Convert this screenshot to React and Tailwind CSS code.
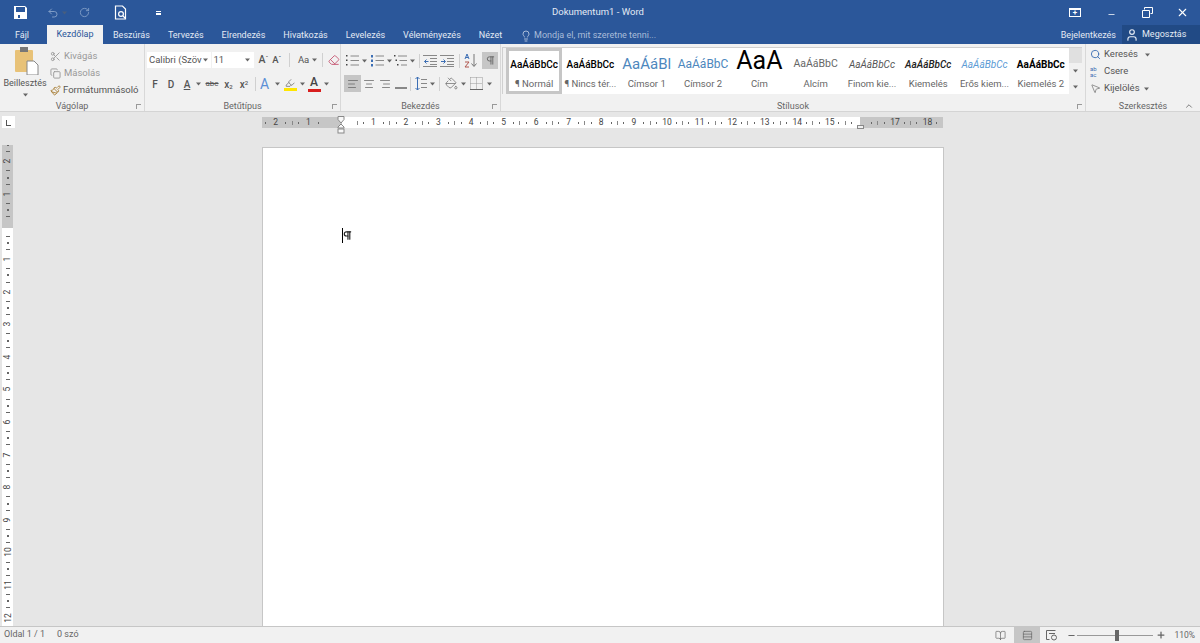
import {
  AlignCenter, AlignLeft, AlignRight, BookOpen, ChevronUp, Copy, Eraser, Highlighter, Lightbulb, Minus, MousePointer2,
  PaintBucket, Paintbrush, Pilcrow, Plus, RotateCw, Rows3, Scissors, Search, Undo2, User, X,
} from 'lucide-react'

const font = 'font-["Roboto","Liberation_Sans",sans-serif]'

const tabs = ['Beszúrás', 'Tervezés', 'Elrendezés', 'Hivatkozás', 'Levelezés', 'Véleményezés', 'Nézet']

const styles = [
  { name: '¶ Normál', preview: 'AaÁáBbCc', cls: 'text-[10px] text-black font-medium', selected: true },
  { name: '¶ Nincs tér...', preview: 'AaÁáBbCc', cls: 'text-[10px] text-black font-medium' },
  { name: 'Címsor 1', preview: 'AaÁáBl', cls: 'text-[15px] text-[#4d87bd]' },
  { name: 'Címsor 2', preview: 'AaÁáBbC', cls: 'text-[12px] text-[#4d87bd]' },
  { name: 'Cím', preview: 'AaA', cls: 'text-[25px] text-black leading-[22px] pb-[6px]' },
  { name: 'Alcím', preview: 'AaÁáBbC', cls: 'text-[10.5px] text-[#666]' },
  { name: 'Finom kie...', preview: 'AaÁáBbCc', cls: 'text-[10px] text-[#555] italic' },
  { name: 'Kiemelés', preview: 'AaÁáBbCc', cls: 'text-[10px] text-[#222] italic font-medium' },
  { name: 'Erős kiem...', preview: 'AaÁáBbCc', cls: 'text-[10px] text-[#5b9bd5] italic' },
  { name: 'Kiemelés 2', preview: 'AaÁáBbCc', cls: 'text-[10px] text-black font-bold' },
]

function Caret({ className = '' }) {
  return (
    <svg width="7" height="4" viewBox="0 0 7 4" className={`shrink-0 text-[#666] ${className}`}>
      <path d="M1 .5h5L3.5 3.5z" fill="currentColor" />
    </svg>
  )
}

function Sep({ className = '' }) {
  return <span className={`w-px h-[14px] bg-[#d0d0d0] shrink-0 ${className}`} />
}

function SaveIcon() {
  return (
    <svg width="13" height="13" viewBox="0 0 13 13" className="shrink-0">
      <path d="M0 0h2v6h9V0l2 2v11H0z" fill="#fff" />
      <path d="M2 0h9v1H2z" fill="#fff" />
      <path d="M4 9h2v3H4z" fill="#2b579a" />
    </svg>
  )
}

function PrintPreviewIcon() {
  return (
    <svg width="14" height="16" viewBox="0 0 14 16" fill="none" stroke="#fff" strokeWidth="1.2">
      <path d="M1.5 1h7l3 3v10h-10z" />
      <circle cx="7" cy="9" r="2.4" />
      <path d="M9 11l2.5 2.5" />
    </svg>
  )
}

function PasteIcon() {
  return (
    <svg width="24" height="28" viewBox="0 0 24 28">
      <rect x="0" y="3" width="18" height="22" rx="1" fill="#e8c278" />
      <rect x="5" y="0" width="8" height="5" fill="#777" />
      <path d="M12 14h7l4 4v10H12z" fill="#fff" stroke="#888" />
    </svg>
  )
}

// bullets on the left, grey rows on the right
function ListIcon({ marks = 'dot', indent = false }) {
  return (
    <svg width="13" height="13" viewBox="0 0 13 13" className="shrink-0">
      {[2, 6.5, 11].map((y, i) => (
        <g key={y}>
          <rect x={indent ? i * 1.5 : 0} y={y - 1} width={marks === 'num' ? 2 : 1.5} height={marks === 'num' ? 2.5 : 1.5} fill={marks === 'num' ? '#3c6eb4' : '#444'} />
          <path d={`M${indent ? 4 + i * 1.5 : 4.5} ${y}H13`} stroke="#888" />
        </g>
      ))}
    </svg>
  )
}

function IndentIcon({ flip = false }) {
  return (
    <svg width="14" height="12" viewBox="0 0 14 12" className="shrink-0">
      <path d="M0 .5h14M7 3.5h7M7 6.5h7M7 9.5h7M0 11.5h14" stroke="#888" />
      <path d={flip ? 'M1 6.5h4M3.5 4.5l2 2-2 2' : 'M5.5 6.5h-4M3.5 4.5l-2 2 2 2'} stroke="#3c6eb4" fill="none" />
    </svg>
  )
}

function SortIcon() {
  return (
    <svg width="14" height="15" viewBox="0 0 14 15" className="shrink-0" fill="none">
      <path d="M1 6l2-5 2 5M1.8 4.5h2.4" stroke="#3c6eb4" />
      <path d="M1 9h4l-4 5h4" stroke="#b0574f" />
      <path d="M10 1v12M7.5 10.5l2.5 3 2.5-3" stroke="#777" />
    </svg>
  )
}

function LineSpacingIcon() {
  return (
    <svg width="12" height="15" viewBox="0 0 12 15" className="shrink-0" fill="none">
      <path d="M2.5 1v13M.5 3l2-2 2 2M.5 12l2 2 2-2" stroke="#3c6eb4" />
      <path d="M6 3.5h6M6 7.5h6M6 11.5h6" stroke="#888" />
    </svg>
  )
}

function BorderIcon() {
  return (
    <svg width="13" height="13" viewBox="0 0 13 13" className="shrink-0">
      <path d="M.5 .5h12M.5 6.5h12M6.5 .5v12M.5 .5v12M12.5 .5v12" stroke="#999" strokeDasharray="1 1" fill="none" />
      <path d="M0 12.5h13" stroke="#666" />
    </svg>
  )
}

function WebLayoutIcon() {
  return (
    <svg width="12" height="12" viewBox="0 0 12 12" className="shrink-0" fill="none" stroke="#666">
      <path d="M.5 1.5h9M.5 1.5v9h3M3 4.5h6" />
      <circle cx="8" cy="8.5" r="2.5" />
    </svg>
  )
}

function ColorA({ bar, color = '#444' }) {
  return (
    <span className="flex flex-col items-center leading-none w-[14px]">
      <span className="text-[12px] font-medium leading-[11px]" style={{ color }}>A</span>
      <span className="w-[13px] h-[3px] mt-[1px]" style={{ background: bar }} />
    </span>
  )
}

function GroupLabel({ children, launcher = true }) {
  return (
    <div className="relative h-[10px] flex items-center justify-center text-[9px] leading-[10px] text-[#666]">
      {children}
      {launcher && <span className="absolute right-[3px] top-[3px] w-[5px] h-[5px] border-l border-t border-[#999]" />}
    </div>
  )
}

function Cell({ n }) {
  return (
    <div className="w-[32.55px] shrink-0 flex items-center justify-between text-[8.5px] text-[#444]">
      <span className="w-px h-[4px] bg-[#888]" />
      <span className="w-px h-[2px] bg-[#666]" />
      <span className="w-[8px] text-center">{n}</span>
      <span className="w-px h-[2px] bg-[#666]" />
      <span className="w-0" />
    </div>
  )
}

function HorizontalRuler() {
  const right = Array.from({ length: 18 }, (_, i) => i + 1)
  return (
    <div className="relative w-[681px] h-[11px] bg-white overflow-hidden">
      <div className="absolute left-0 top-0 h-full w-[80px] bg-[#c6c6c6]" />
      <div className="absolute right-0 top-0 h-full w-[83px] bg-[#c6c6c6]" />
      <div className="relative flex h-full ml-[-3px]">
        <Cell n={2} />
        <Cell n={1} />
        <div className="w-[32.55px] shrink-0" />
        {right.map((n) => <Cell key={n} n={n === 16 ? '' : n} />)}
      </div>
    </div>
  )
}

function VerticalRuler() {
  const nums = [2, 1, '', 1, 2, 3, 4, 5, 6, 7, 8, 9, 10, 11, 12]
  return (
    <div className="w-[11px] ml-[2px] h-full overflow-hidden bg-white relative">
      <div className="absolute top-0 left-0 w-full h-[83px] bg-[#c6c6c6]" />
      <div className="relative flex flex-col items-center">
        {nums.map((n, i) => (
          <div key={i} className="h-[32.6px] shrink-0 flex flex-col items-center justify-between text-[8.5px] text-[#444]">
            <span className="w-[2px] h-px bg-[#666]" />
            <span className="w-[4px] h-px bg-[#666]" />
            <span className="-rotate-90 leading-[8px] h-[8px]">{n}</span>
            <span className="w-[4px] h-px bg-[#666]" />
            <span className="w-[2px] h-px bg-[#666]" />
          </div>
        ))}
      </div>
    </div>
  )
}

export default function App() {
  return (
    <div className={`w-[1200px] h-[643px] flex flex-col overflow-hidden bg-[#e6e6e6] ${font}`}>
      {/* title bar */}
      <div className="h-[25px] shrink-0 bg-[#2b579a] flex items-center text-white">
        <div className="flex items-center w-[175px] pl-[14px]">
          <SaveIcon />
          <Undo2 size={12} className="ml-[20px] text-[#7f9cc6]" />
          <Caret className="ml-[2px] opacity-50" />
          <RotateCw size={11} className="ml-[11px] text-[#7f9cc6]" />
          <span className="ml-[24px]"><PrintPreviewIcon /></span>
          <span className="ml-[28px] w-[5px] flex flex-col gap-[1px]">
            <span className="h-px bg-white" />
            <span className="h-[2px] bg-white" />
          </span>
        </div>
        <div className="ml-[377px] text-[9.5px] text-[#e4eaf4]">Dokumentum1 - Word</div>
        <div className="ml-auto flex items-center pr-[11px]">
          <span className="w-[12px] h-[9px] border-t-2 border-white border-x border-b flex items-center justify-center text-[8px] leading-none font-bold">+</span>
          <Minus size={9} strokeWidth={2} className="ml-[26px] mt-[3px]" />
          <svg width="11" height="11" viewBox="0 0 11 11" fill="none" stroke="#fff" className="ml-[26px]">
            <path d="M2.5 2.5V.5h8v6h-2M.5 3.5h7v7h-7z" />
          </svg>
          <X size={13} strokeWidth={2} className="ml-[23px]" />
        </div>
      </div>

      {/* tab row */}
      <div className="h-[19px] shrink-0 bg-[#2b579a] flex items-end text-[9px] text-[#e4eaf4] leading-[17px]">
        <span className="ml-[15px] w-[32px] h-[17px]">Fájl</span>
        <span className="w-[56px] h-[19px] mr-[10px] bg-[#f1f1f1] text-[#2b579a] text-center leading-[19px]">Kezdőlap</span>
        <div className="flex gap-[18px]">
          {tabs.map((t) => (
            <span key={t} className="h-[17px]">{t}</span>
          ))}
        </div>
        <span className="ml-[18px] h-[17px] flex items-center text-[#a9bcd9]">
          <Lightbulb size={12} className="mr-[2px]" />
          Mondja el, mit szeretne tenni...
        </span>
        <span className="ml-auto h-[17px]">Bejelentkezés</span>
        <span className="ml-[6px] w-[78px] h-[19px] bg-[#214a85] flex items-center pl-[3px]">
          <User size={14} className="mr-[3px]" />
          Megosztás
        </span>
      </div>

      {/* ribbon */}
      <div className="h-[68px] shrink-0 bg-[#f1f1f1] border-b border-[#d4d4d4] flex text-[#555] text-[9.5px]">
        {/* clipboard */}
        <div className="w-[145px] shrink-0 border-r border-[#d8d8d8] flex flex-col">
          <div className="flex-1 flex pt-[3px]">
            <div className="w-[50px] flex flex-col items-center">
              <span className="ml-[4px] h-[28px]"><PasteIcon /></span>
              <span className="text-[9px] leading-[10px] mt-[3px]">Beillesztés</span>
              <Caret className="mt-[5px]" />
            </div>
            <div className="flex flex-col gap-[1px] pt-[1px] text-[#999]">
              <span className="h-[16px] flex items-center gap-[3px]"><Scissors size={11} />Kivágás</span>
              <span className="h-[16px] flex items-center gap-[3px]"><Copy size={11} />Másolás</span>
              <span className="h-[16px] flex items-center gap-[2px] text-[#555] whitespace-nowrap">
                <Paintbrush size={11} className="text-[#a8803a]" />Formátummásoló
              </span>
            </div>
          </div>
          <GroupLabel>Vágólap</GroupLabel>
        </div>

        {/* font */}
        <div className="w-[196px] shrink-0 border-r border-[#d8d8d8] flex flex-col">
          <div className="flex-1 pt-[8px] pl-[2px] flex flex-col gap-[8px]">
            <div className="h-[16px] flex items-center">
              <span className="w-[65px] h-[16px] bg-white flex items-center px-[2px] justify-between whitespace-nowrap overflow-hidden">Calibri (Szöv<Caret /></span>
              <span className="w-[43px] h-[16px] bg-white ml-px flex items-center pl-[2px] pr-[3px] justify-between">11<Caret /></span>
              <span className="ml-[5px] w-[14px] text-[10.5px] font-medium">A<sup className="text-[6px]">ˆ</sup></span>
              <span className="w-[14px] text-[9.5px] font-medium">A<sup className="text-[6px]">ˇ</sup></span>
              <Sep className="ml-[3px]" />
              <span className="ml-[8px] flex items-center gap-[2px]">Aa<Caret /></span>
              <Sep className="ml-[4px]" />
              <Eraser size={12} className="ml-[5px] text-[#c8607a]" />
            </div>
            <div className="h-[16px] flex items-center text-[10px] font-medium">
              <span className="w-[16px] text-center">F</span>
              <span className="w-[16px] text-center">D</span>
              <span className="w-[16px] text-center underline">A</span>
              <Caret />
              <span className="w-[20px] text-center text-[8px] line-through font-normal">abc</span>
              <span className="w-[13px] text-center">x<sub className="text-[6px]">2</sub></span>
              <span className="w-[16px] text-center ml-[1px]">x<sup className="text-[6px]">2</sup></span>
              <Sep className="ml-[3px]" />
              <span className="ml-[4px] text-[14px] font-normal text-[#5b8fd6] leading-none w-[13px]">A</span>
              <Caret className="ml-[1px]" />
              <span className="ml-[2px] w-[14px] flex flex-col items-center">
                <Highlighter size={10} className="text-[#777]" />
                <span className="w-[13px] h-[3px] bg-[#ffe600]" />
              </span>
              <Caret className="ml-[2px]" />
              <span className="ml-[1px]"><ColorA bar="#d81e1e" /></span>
              <Caret className="ml-[2px]" />
            </div>
          </div>
          <GroupLabel>Betűtípus</GroupLabel>
        </div>

        {/* paragraph */}
        <div className="w-[160px] shrink-0 border-r border-[#d8d8d8] flex flex-col">
          <div className="flex-1 pt-[8px] pl-[3px] flex flex-col gap-[6px] text-[#666]">
            <div className="h-[17px] flex items-center">
              <span className="ml-[2px]"><ListIcon /></span><Caret className="ml-[2px]" />
              <span className="ml-[3px]"><ListIcon marks="num" /></span><Caret className="ml-[2px]" />
              <span className="ml-[1px]"><ListIcon indent /></span><Caret className="ml-[2px]" />
              <Sep className="ml-[3px]" />
              <span className="ml-[3px]"><IndentIcon /></span>
              <span className="ml-[3px]"><IndentIcon flip /></span>
              <Sep className="ml-[5px]" />
              <span className="ml-[4px]"><SortIcon /></span>
              <span className="ml-[4px] w-[16px] h-[17px] bg-[#c6c6c6] flex items-center justify-center"><Pilcrow size={11} /></span>
            </div>
            <div className="h-[17px] flex items-center">
              <span className="w-[17px] h-[17px] bg-[#c6c6c6] flex items-center justify-center"><AlignLeft size={12} strokeWidth={1.5} /></span>
              <AlignCenter size={12} strokeWidth={1.5} className="ml-[2px]" />
              <AlignRight size={12} strokeWidth={1.5} className="ml-[4px]" />
              <span className="ml-[4px] w-[12px] h-[2px] mt-[8px] bg-[#888]" />
              <Sep className="ml-[3px]" />
              <span className="ml-[4px]"><LineSpacingIcon /></span><Caret className="ml-[2px]" />
              <Sep className="ml-[3px]" />
              <PaintBucket size={13} strokeWidth={1.3} className="ml-[5px]" /><Caret className="ml-[2px]" />
              <span className="ml-[3px]"><BorderIcon /></span><Caret className="ml-[3px]" />
            </div>
          </div>
          <GroupLabel>Bekezdés</GroupLabel>
        </div>

        {/* styles */}
        <div className="w-[585px] shrink-0 border-r border-[#d8d8d8] flex flex-col">
          <div className="flex-1 pt-[3px] pl-[1px]">
            <div className="h-[47px] w-[580px] flex border-t border-l border-[#d0d0d0] bg-white">
              <div className="w-[3px] shrink-0 bg-[#f1f1f1]" />
              {styles.map((s) => (
                <div
                  key={s.name}
                  className={`w-[56.3px] shrink-0 flex flex-col items-center whitespace-nowrap border-[3px] ${s.selected ? 'border-[#c6c6c6]' : 'border-white'}`}
                >
                  <div className={`h-[26px] flex items-center ${s.cls}`}>{s.preview}</div>
                  <div className="text-[9.5px] text-[#666] leading-[13px]">{s.name}</div>
                </div>
              ))}
              <div className="w-[13px] shrink-0 flex flex-col bg-[#f1f1f1] items-center text-[#777]">
                <div className="w-full h-[15px] bg-[#e0e0e0]" />
                <div className="h-[16px] flex items-center"><Caret /></div>
                <div className="h-[15px] flex items-center"><Caret /></div>
              </div>
            </div>
          </div>
          <GroupLabel>Stílusok</GroupLabel>
        </div>

        {/* editing */}
        <div className="flex-1 flex flex-col">
          <div className="flex-1 pt-[2px] pl-[4px] flex flex-col">
            <span className="h-[17px] flex items-center gap-[3px]"><Search size={11} className="text-[#3c6eb4]" />Keresés<Caret className="ml-[3px]" /></span>
            <span className="h-[17px] flex items-center gap-[3px]"><span className="w-[11px] text-[6px] leading-[6px] text-[#3c6eb4]">ab<br />ac</span>Csere</span>
            <span className="h-[17px] flex items-center gap-[3px]"><MousePointer2 size={11} strokeWidth={1.3} />Kijelölés<Caret /></span>
          </div>
          <div className="relative">
            <GroupLabel launcher={false}>Szerkesztés</GroupLabel>
            <ChevronUp size={10} className="absolute right-[6px] top-0 text-[#666]" />
          </div>
        </div>
      </div>

      {/* document area */}
      <div className="flex-1 min-h-0 flex overflow-hidden">
        <div className="w-[16px] shrink-0 flex flex-col">
          <div className="h-[33px] shrink-0 pt-[4px] pl-[2px]">
            <div className="w-[13px] h-[12px] bg-white flex items-end justify-center pb-[2px]">
              <span className="w-[5px] h-[6px] border-l border-b border-[#555]" />
            </div>
          </div>
          <div className="flex-1 min-h-0"><VerticalRuler /></div>
        </div>
        <div className="pl-[246px] flex flex-col">
          <div className="h-[35px] shrink-0 pt-[5px] relative">
            <HorizontalRuler />
            <div className="absolute left-[74px] top-[4px] flex flex-col items-center">
              <svg width="11" height="18" viewBox="0 0 11 18" fill="#f8f8f8" stroke="#888">
                <path d="M2 .5h6v3L5 7 2 3.5zM5 8l3 3v1H2v-1z" />
                <rect x="2" y="13" width="6" height="4" />
              </svg>
            </div>
            <div className="absolute left-[595px] top-[13px] w-[7px] h-[4px] border border-[#888] bg-[#f1f1f1]" />
          </div>
          <div className="relative w-[682px] flex-1 bg-white border-l border-r border-t border-[#c6c6c6]">
            <div className="absolute left-[79px] top-[80px] h-[15px] w-px bg-black" />
            <Pilcrow size={11} strokeWidth={2.5} className="absolute left-[79px] top-[82px] text-[#222]" />
          </div>
        </div>
      </div>

      {/* status bar */}
      <div className="h-[17px] shrink-0 bg-[#f1f1f1] border-t border-[#c6c6c6] flex items-center text-[9px] text-[#666]">
        <span className="ml-[4px]">Oldal 1 / 1</span>
        <span className="ml-[12px]">0 szó</span>
        <div className="ml-auto flex items-center h-full pr-[5px]">
          <BookOpen size={11} strokeWidth={1.5} />
          <span className="ml-[8px] w-[26px] h-full bg-[#c6c6c6] flex items-center justify-center"><Rows3 size={11} strokeWidth={1.5} /></span>
          <span className="ml-[6px]"><WebLayoutIcon /></span>
          <Minus size={9} strokeWidth={3} className="ml-[9px]" />
          <div className="relative w-[76px] h-px bg-[#999] ml-[1px]">
            <span className="absolute left-[38px] top-[-5px] w-[4px] h-[11px] bg-[#666]" />
          </div>
          <Plus size={10} strokeWidth={3} className="ml-[3px]" />
          <span className="ml-[8px] text-[8.5px]">110%</span>
        </div>
      </div>
    </div>
  )
}
